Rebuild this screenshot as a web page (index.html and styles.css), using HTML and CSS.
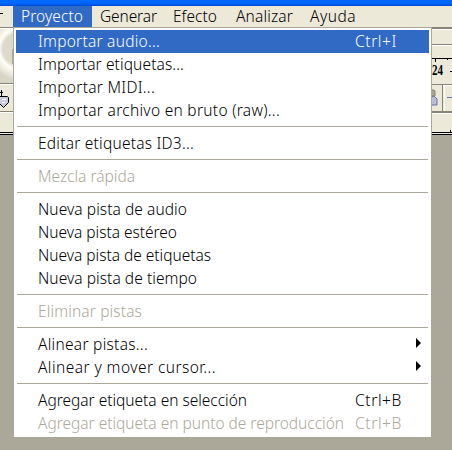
FILE: index.html
```
<!DOCTYPE html>
<html lang="es">
<head>
<meta charset="utf-8">
<title>Proyecto</title>
<link rel="stylesheet" href="styles.css">
</head>
<body>
<div class="window">
  <div class="titlebar"></div>
  <nav class="menubar">
    <span class="edge-mark"></span>
    <span class="tab active"><span data-w="62">Proyecto</span></span>
    <span class="tab generar"><span data-w="57">Generar</span></span>
    <span class="tab efecto"><span data-w="44">Efecto</span></span>
    <span class="tab analizar"><span data-w="57">Analizar</span></span>
    <span class="tab ayuda"><span data-w="46">Ayuda</span></span>
  </nav>
  <div class="workspace">
    <svg class="strip-left" width="14" height="108" viewBox="0 0 14 108">
      <defs>
        <radialGradient id="knob" gradientUnits="userSpaceOnUse" cx="19" cy="22" r="31">
          <stop offset="0" stop-color="#dedac9"/><stop offset=".52" stop-color="#dedac9"/>
          <stop offset=".64" stop-color="#fffef8"/><stop offset=".76" stop-color="#f4f2e7"/><stop offset="1" stop-color="#d9d5c5"/>
        </radialGradient>
      </defs>
      <rect width="14" height="108" fill="#ece9d8"/>
      <path d="M0 .5h14M0 56.5h14M0 84.5h14" stroke="#888377"/>
      <path d="M0 1.5h14M0 57.5h14M0 85.5h14" stroke="#fff"/>
      <rect y="2" width="13" height="54" fill="url(#knob)"/>
      <path d="M12.5 22v15" stroke="#aaa797"/>
      <path d="M0 65.500h3M1.500 63v6" stroke="#000"/>
      <path d="M0 69.500h7.500l1 1v5l-5 5-4-4" fill="#c9cbe2" stroke="#000"/>
      <path d="M2 72.500h4M2 75.500h3" stroke="#fff"/>
      <path d="M0 105.500h14M0 107.500h14" stroke="#000"/>
    </svg>
    <svg class="strip-right" width="21" height="108" viewBox="0 0 21 108">
      <rect width="21" height="108" fill="#ece9d8"/>
      <path d="M0 1h21" stroke="#888377" stroke-width="2"/>
      <path d="M0 2.500h21M0 18.500h21M0 86.500h21" stroke="#fff"/>
      <path d="M0 17.500h21M0 57.500h21" stroke="#888377"/>
      <path d="M0 85h21" stroke="#888377" stroke-width="2"/>
      <path d="M0 31.500h21M4.500 32v3M16.500 32v1M19 44.500h2" stroke="#000"/>
      <text class="ruler" x="1" y="48" textLength="11" lengthAdjust="spacingAndGlyphs">24</text>
      <path d="M11.500 58v26" stroke="#888377"/>
      <path d="M13.500 58v26M12 58.500h9" stroke="#fff"/>
      <path d="M0 63h3l1 1v5H0z" fill="#aaa797" stroke="#888377"/>
      <path d="M0 70h1l2-1 3 3v6H0z" fill="#b8bddb" stroke="#6c70a4"/>
      <path d="M16 70.500h5" stroke="#6c70a4"/>
      <path d="M19.500 103v2M0 105.500h21M0 107.500h21" stroke="#000"/>
    </svg>
  </div>
</div>
<div class="menu">
  <div class="item selected"><span data-w="122">Importar audio...</span><span class="key"><span data-w="42">Ctrl+I</span></span></div>
  <div class="item"><span data-w="146">Importar etiquetas...</span></div>
  <div class="item"><span data-w="117">Importar MIDI...</span></div>
  <div class="item"><span data-w="242">Importar archivo en bruto (raw)...</span></div>
  <div class="rule"></div>
  <div class="item"><span data-w="156">Editar etiquetas ID3...</span></div>
  <div class="rule"></div>
  <div class="item disabled"><span data-w="97">Mezcla rápida</span></div>
  <div class="rule"></div>
  <div class="item"><span data-w="149">Nueva pista de audio</span></div>
  <div class="item"><span data-w="139">Nueva pista estéreo</span></div>
  <div class="item"><span data-w="173">Nueva pista de etiquetas</span></div>
  <div class="item"><span data-w="159">Nueva pista de tiempo</span></div>
  <div class="rule"></div>
  <div class="item disabled"><span data-w="104">Eliminar pistas</span></div>
  <div class="rule"></div>
  <div class="item"><span data-w="110">Alinear pistas...</span><i class="arrow"></i></div>
  <div class="item"><span data-w="178">Alinear y mover cursor...</span><i class="arrow"></i></div>
  <div class="rule"></div>
  <div class="item"><span data-w="209">Agregar etiqueta en selección</span><span class="key"><span data-w="47">Ctrl+B</span></span></div>
  <div class="item disabled"><span data-w="306">Agregar etiqueta en punto de reproducción</span><span class="key"><span data-w="47">Ctrl+B</span></span></div>
</div>
<script src="script.js"></script>
</body>
</html>
```
FILE: styles.css
```
* { box-sizing: border-box; }
body {
  margin: 0;
  width: 452px;
  height: 450px;
  overflow: hidden;
  position: relative;
  background: #aca899;
  color: #000;
  font: 300 15.5px/23px "Noto Sans", "DejaVu Sans", sans-serif;
}
.titlebar { height: 6px; background: linear-gradient(#0068ff 0 3px, #0058ec 5px, #0045bd); }
.menubar { height: 21px; display: flex; background: #ece9d8; line-height: 20px; }
.menubar span { white-space: pre; }
.edge-mark { width: 3px; height: 1px; margin: 7px 10px 0 0; background: #000; }
.tab { width: 79px; padding-left: 8px; height: 21px; }
.active { background: #316ac5; color: #fff; }
.generar { width: 74px; }
.efecto { width: 62px; padding-left: 7px; }
.analizar { width: 74px; }
.ayuda { width: 70px; }
.workspace { display: flex; justify-content: space-between; }
.workspace svg { display: block; }
.ruler { font: bold 14px "Liberation Serif", serif; }
.menu {
  position: absolute;
  left: 13px;
  top: 27px;
  width: 419px;
  height: 411px;
  padding: 2px;
  background: #fff;
  border: 1px solid #aca899;
}
.item {
  position: relative;
  display: flex;
  height: 23px;
  padding-left: 22px;
  white-space: pre;
}
.selected { background: #316ac5; color: #fff; }
.disabled { color: #aca899; }
.key { position: absolute; left: 339px; }
.rule { height: 10px; padding: 4px 1px 0; }
.rule::before { content: ""; display: block; height: 1px; background: #aca899; }
.arrow {
  position: absolute;
  right: 8px;
  top: 5px;
  border-left: 5px solid #000;
  border-top: 5px solid transparent;
  border-bottom: 5px solid transparent;
}
```
FILE: script.js
```
document.querySelectorAll("[data-w]").forEach(function (label) {
  var width = label.getBoundingClientRect().width;
  var gap = (Number(label.dataset.w) - width) / label.textContent.length;
  label.style.letterSpacing = gap.toFixed(3) + "px";
});
```
